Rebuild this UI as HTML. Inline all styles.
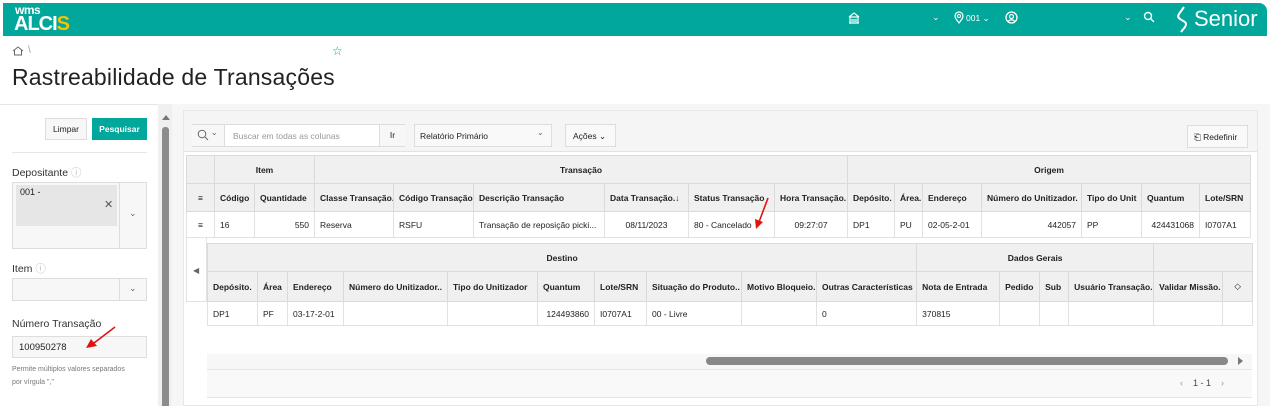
<!DOCTYPE html>
<html><head><meta charset="utf-8">
<style>
*{margin:0;padding:0;box-sizing:border-box}
body{width:1270px;height:406px;overflow:hidden;background:#fff;font-family:"Liberation Sans",sans-serif;color:#222;position:relative}
.a{position:absolute}
.hdr{left:3px;top:3px;width:1264px;height:33px;background:#00a79a;border-radius:0 8px 0 0}
.w{color:#fff}
.t{font-size:9px;white-space:nowrap}
table{border-collapse:collapse;position:absolute;table-layout:fixed}
td{border:1px solid #e2e2e2;font-size:8.5px;white-space:nowrap;overflow:hidden;padding:0 5px;height:100%}
.g td{background:#f0f0f0;font-weight:bold;text-align:center;border-color:#dadada}
.h td{background:#f0f0f0;font-weight:bold;border-color:#dadada}
.d td{background:#fff}
.r{text-align:right}
.c{text-align:center}
</style></head><body>
<div class="a hdr"></div>
<div class="a w" style="left:15px;top:3px;font-size:12px;font-weight:bold;letter-spacing:-0.5px">wms</div>
<div class="a w" style="left:14px;top:13px;font-size:20px;font-weight:bold;letter-spacing:-1px">ALCI<span style="color:#f5c400">S</span></div>
<svg class="a" style="left:848px;top:12px" width="12" height="12"><path d="M1 11 H11 M2 11 V5 H10 V11 M1 5 L6 1 L11 5 M4 7 V10 M6 7 V10 M8 7 V10" fill="none" stroke="#fff" stroke-width="1.2"/></svg>
<div class="a w t" style="left:932px;top:12px">⌄</div>
<svg class="a" style="left:954px;top:11px" width="10" height="13"><path d="M5 12 C1 7 1 6 1 5 A4 4 0 0 1 9 5 C9 6 9 7 5 12Z" fill="none" stroke="#fff" stroke-width="1.2"/><circle cx="5" cy="5" r="1.5" fill="none" stroke="#fff"/></svg>
<div class="a w t" style="left:966px;top:13px;font-size:8.5px">001 ⌄</div>
<svg class="a" style="left:1005px;top:11px" width="13" height="13"><circle cx="6.5" cy="6.5" r="5.5" fill="none" stroke="#fff" stroke-width="1.3"/><circle cx="6.5" cy="5.5" r="2" fill="none" stroke="#fff" stroke-width="1.2"/><path d="M3 10.5 Q6.5 7 10 10.5" fill="none" stroke="#fff" stroke-width="1.2"/></svg>
<div class="a w t" style="left:1124px;top:12px">⌄</div>
<svg class="a" style="left:1143px;top:11px" width="12" height="12"><circle cx="5" cy="5" r="3.5" fill="none" stroke="#fff" stroke-width="1.4"/><line x1="7.5" y1="7.5" x2="11" y2="11" stroke="#fff" stroke-width="1.4"/></svg>
<svg class="a" style="left:1175px;top:5px" width="16" height="28"><path d="M9 2 L4 9 Q2 12 5 14 L10 17 Q12 19 10 22 L6 27" fill="none" stroke="#fff" stroke-width="2"/></svg>
<div class="a w" style="left:1194px;top:6px;font-size:22px">Senior</div>

<svg class="a" style="left:12px;top:46px" width="12" height="10"><path d="M1 5 L6 1 L11 5 M2.5 4 V9 H9.5 V4" fill="none" stroke="#666" stroke-width="1"/></svg>
<div class="a t" style="left:28px;top:45px;color:#999;font-size:10px">\</div>
<div class="a" style="left:332px;top:44px;color:#00a79a;font-size:12px">☆</div>
<div class="a" style="left:12px;top:64px;font-size:23px;color:#222;letter-spacing:0.2px">Rastreabilidade de Transações</div>

<div class="a" style="left:0;top:104px;width:1270px;height:1px;background:#e6e6e6"></div>
<div class="a" style="left:172px;top:104px;width:1098px;height:302px;background:#f6f6f6"></div>
<div class="a" style="left:158px;top:104px;width:14px;height:302px;background:#f0f0f0"></div>
<div class="a" style="left:162px;top:115px;width:0;height:0;border-left:4px solid transparent;border-right:4px solid transparent;border-bottom:5px solid #777"></div>
<div class="a" style="left:162px;top:127px;width:7px;height:279px;background:#8c8c8c;border-radius:3px 3px 0 0"></div>

<div class="a t c" style="left:45px;top:118px;width:42px;height:22px;border:1px solid #ddd;background:#f7f7f7;line-height:20px;font-size:8.5px">Limpar</div>
<div class="a t c" style="left:92px;top:118px;width:55px;height:22px;background:#00a79a;color:#fff;font-weight:bold;line-height:22px;font-size:8.5px">Pesquisar</div>
<div class="a" style="left:12px;top:152px;width:135px;height:1px;background:#e6e6e6"></div>
<div class="a t" style="left:12px;top:165px;font-size:10.5px;color:#333">Depositante <span style="color:#bbb">ⓘ</span></div>
<div class="a" style="left:12px;top:182px;width:135px;height:67px;border:1px solid #ddd;background:#f7f7f7"></div>
<div class="a" style="left:119px;top:182px;width:1px;height:67px;background:#ddd"></div>
<div class="a" style="left:16px;top:185px;width:101px;height:41px;background:#e6e6e6"></div>
<div class="a t" style="left:20px;top:187px;font-size:9px">001 -</div>
<div class="a t" style="left:104px;top:198px;font-size:11px;color:#555">✕</div>
<div class="a t" style="left:129px;top:208px;color:#666">⌄</div>
<div class="a t" style="left:12px;top:261px;font-size:10.5px;color:#333">Item <span style="color:#bbb">ⓘ</span></div>
<div class="a" style="left:12px;top:278px;width:135px;height:23px;border:1px solid #ddd;background:#f7f7f7"></div>
<div class="a" style="left:119px;top:278px;width:1px;height:23px;background:#ddd"></div>
<div class="a t" style="left:129px;top:283px;color:#666">⌄</div>
<div class="a t" style="left:12px;top:318px;font-size:10.5px;color:#333">Número Transação</div>
<div class="a" style="left:12px;top:336px;width:135px;height:22px;border:1px solid #ddd;background:#f7f7f7"></div>
<div class="a t" style="left:19px;top:342px;font-size:9.5px">100950278</div>
<div class="a t" style="left:12px;top:363px;font-size:7px;color:#777;line-height:13px">Permite múltiplos valores separados<br>por vírgula ","</div>

<div class="a" style="left:183px;top:110px;width:1075px;height:296px;background:#fff;border:1px solid #e8e8e8"></div>
<div class="a" style="left:184px;top:111px;width:1073px;height:41px;background:#f5f5f5;border-bottom:1px solid #e2e2e2"></div>
<div class="a" style="left:192px;top:124px;width:213px;height:23px;border:1px solid #ddd;background:#fff"></div>
<div class="a" style="left:192px;top:125px;width:33px;height:21px;background:#f7f7f7;border-right:1px solid #ddd"></div>
<svg class="a" style="left:197px;top:129px" width="12" height="12"><circle cx="5" cy="5" r="3.8" fill="none" stroke="#666" stroke-width="1"/><line x1="8" y1="8" x2="11" y2="11" stroke="#666"/></svg>
<div class="a t" style="left:211px;top:128px;font-size:8px;color:#666">⌄</div>
<div class="a t" style="left:233px;top:131px;font-size:8.5px;color:#999">Buscar em todas as colunas</div>
<div class="a t c" style="left:379px;top:125px;width:26px;height:21px;border-left:1px solid #ddd;background:#f7f7f7;line-height:21px;font-size:8.5px">Ir</div>
<div class="a" style="left:414px;top:124px;width:138px;height:23px;border:1px solid #ddd;background:#f9f9f9"></div>
<div class="a t" style="left:420px;top:131px;font-size:8.5px">Relatório Primário</div>
<div class="a t" style="left:537px;top:128px;font-size:8px;color:#666">⌄</div>
<div class="a t" style="left:565px;top:124px;width:51px;height:23px;border:1px solid #ddd;background:#f9f9f9;line-height:22px;padding-left:7px;font-size:8.5px">Ações ⌄</div>
<div class="a t" style="left:1187px;top:125px;width:61px;height:23px;border:1px solid #ddd;background:#f9f9f9;line-height:22px;padding-left:6px;font-size:8.5px">⎗ Redefinir</div>

<table style="left:186px;top:155px;width:1064px;height:82px">
<colgroup><col style="width:28px"><col style="width:40px"><col style="width:60px"><col style="width:79px"><col style="width:80px"><col style="width:131px"><col style="width:84px"><col style="width:86px"><col style="width:73px"><col style="width:47px"><col style="width:28px"><col style="width:59px"><col style="width:100px"><col style="width:60px"><col style="width:58px"><col style="width:51px"></colgroup>
<tr class="g" style="height:28px"><td></td><td colspan="2">Item</td><td colspan="6">Transação</td><td colspan="7">Origem</td></tr>
<tr class="h" style="height:28px"><td class="c" style="font-weight:normal">≡</td><td>Código</td><td>Quantidade</td><td>Classe Transação.</td><td>Código Transação.</td><td>Descrição Transação</td><td>Data Transação.↓</td><td>Status Transação</td><td>Hora Transação.</td><td>Depósito.</td><td>Área.</td><td>Endereço</td><td>Número do Unitizador.</td><td>Tipo do Unit</td><td>Quantum</td><td>Lote/SRN</td></tr>
<tr class="d" style="height:26px"><td class="c">≡</td><td>16</td><td class="r">550</td><td>Reserva</td><td>RSFU</td><td>Transação de reposição picki...</td><td class="c">08/11/2023</td><td>80 - Cancelado</td><td class="c">09:27:07</td><td>DP1</td><td>PU</td><td>02-05-2-01</td><td class="r">442057</td><td>PP</td><td class="r">424431068</td><td>I0707A1</td></tr>
</table>

<div class="a" style="left:186px;top:237px;width:21px;height:65px;border:1px solid #e2e2e2;border-top:none"></div>
<div class="a t" style="left:193px;top:266px;font-size:8px;color:#666">◀</div>
<div class="a" style="left:207px;top:240px;width:1045px;height:160px;background:#fff"></div>
<table style="left:207px;top:243px;width:1045px;height:82px">
<colgroup><col style="width:50px"><col style="width:30px"><col style="width:56px"><col style="width:104px"><col style="width:90px"><col style="width:57px"><col style="width:52px"><col style="width:95px"><col style="width:75px"><col style="width:100px"><col style="width:83px"><col style="width:40px"><col style="width:29px"><col style="width:85px"><col style="width:69px"><col style="width:30px"></colgroup>
<tr class="g" style="height:28px"><td colspan="10">Destino</td><td colspan="4">Dados Gerais</td><td colspan="2"></td></tr>
<tr class="h" style="height:30px"><td>Depósito.</td><td>Área</td><td>Endereço</td><td>Número do Unitizador..</td><td>Tipo do Unitizador</td><td>Quantum</td><td>Lote/SRN</td><td>Situação do Produto..</td><td>Motivo Bloqueio.</td><td>Outras Características</td><td>Nota de Entrada</td><td>Pedido</td><td>Sub</td><td>Usuário Transação.</td><td>Validar Missão.</td><td class="c" style="font-weight:normal">◇</td></tr>
<tr class="d" style="height:24px"><td>DP1</td><td>PF</td><td>03-17-2-01</td><td></td><td></td><td class="r">124493860</td><td>I0707A1</td><td>00 - Livre</td><td></td><td>0</td><td>370815</td><td></td><td></td><td></td><td></td><td></td></tr>
</table>
<div class="a" style="left:207px;top:354px;width:1045px;height:15px;background:#f7f7f7"></div>
<div class="a" style="left:706px;top:357px;width:522px;height:8px;background:#888;border-radius:4px"></div>
<div class="a" style="left:1238px;top:357px;width:0;height:0;border-top:4px solid transparent;border-bottom:4px solid transparent;border-left:5px solid #777"></div>
<div class="a" style="left:207px;top:369px;width:1045px;height:1px;background:#e5e5e5"></div>
<div class="a" style="left:207px;top:370px;width:1045px;height:28px;background:#f9f9f9;border-bottom:1px solid #e5e5e5"></div>
<div class="a t" style="left:1180px;top:378px;font-size:9px;color:#999">‹&nbsp;&nbsp;&nbsp;&nbsp;<span style="color:#444">1 - 1</span>&nbsp;&nbsp;&nbsp;&nbsp;›</div>

<svg class="a" style="left:0;top:0" width="1270" height="406">
<line x1="768" y1="198" x2="759" y2="222" stroke="#e0140f" stroke-width="1.6"/><polygon points="756,229 755,219 763,222" fill="#e0140f"/>
<line x1="115" y1="327" x2="94" y2="343" stroke="#e0140f" stroke-width="1.6"/><polygon points="86,348 91,339 97,346" fill="#e0140f"/>
</svg>
</body></html>
